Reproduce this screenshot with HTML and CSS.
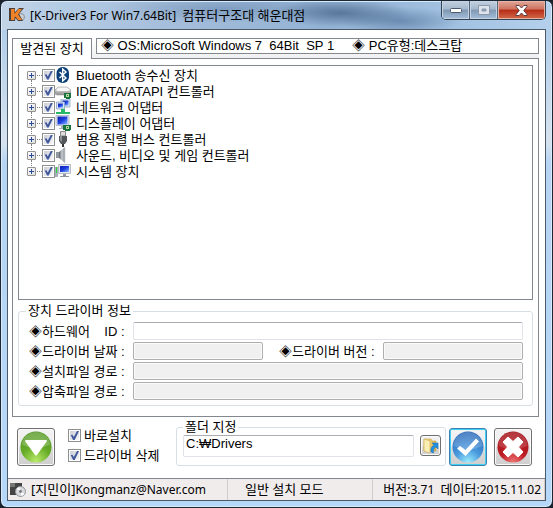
FILE: index.html
```html
<!DOCTYPE html>
<html lang="ko">
<head>
<meta charset="utf-8">
<title>K-Driver3 For Win7.64Bit</title>
<link rel="stylesheet" href="styles.css">
</head>
<body>
<svg width="0" height="0" class="defs" aria-hidden="true">
  <defs>
    <linearGradient id="screen" x1="0" y1="0" x2="1" y2="1"><stop offset="0" stop-color="#0a1fa8"/><stop offset=".5" stop-color="#1c3fe0"/><stop offset="1" stop-color="#8fc0ff"/></linearGradient>
    <linearGradient id="metal" x1="0" y1="0" x2="0" y2="1"><stop offset="0" stop-color="#f4f4f4"/><stop offset="1" stop-color="#8c8c8c"/></linearGradient>
    <linearGradient id="cone" x1="0" y1="0" x2="1" y2="0"><stop offset="0" stop-color="#5c6268"/><stop offset=".5" stop-color="#c8ced2"/><stop offset="1" stop-color="#7d858b"/></linearGradient>
    <radialGradient id="green" cx=".5" cy=".95" r=".95"><stop offset="0" stop-color="#b9ea6a"/><stop offset=".5" stop-color="#67ac28"/><stop offset="1" stop-color="#4f9420"/></radialGradient>
    <radialGradient id="blue" cx=".5" cy="1" r=".95"><stop offset="0" stop-color="#9df0ff"/><stop offset=".45" stop-color="#4a9ade"/><stop offset="1" stop-color="#2566b8"/></radialGradient>
    <radialGradient id="red" cx=".5" cy="1" r=".95"><stop offset="0" stop-color="#f07878"/><stop offset=".45" stop-color="#bd1d24"/><stop offset="1" stop-color="#a5141b"/></radialGradient>
    <linearGradient id="folder" x1="0" y1="0" x2="1" y2="0"><stop offset="0" stop-color="#f8e49a"/><stop offset="1" stop-color="#dfb64e"/></linearGradient>
  </defs>
</svg>
<main class="window">
  <header class="titlebar">
    <svg class="app-icon" viewBox="0 0 16 16" aria-hidden="true">
      <circle cx="12" cy="10" r="3.500" fill="#c9ced3" stroke="#8e969c"/>
      <path d="M0 1h6v4l4-4h5L10 7l4 7H9L6.500 11 6 14H0z" fill="#4a4038"/>
      <path d="M2 2h3.500v5l4-5H13L9 7.500l4 5.500H9L6.500 9.500l-1 1V13H2z" fill="#f08228"/>
    </svg>
    <h1 class="title"><span class="latin">[K-Driver3 For Win7.64Bit]&nbsp; </span>컴퓨터구조대 해운대점</h1>
    <div class="caption-buttons">
      <button class="caption" type="button" aria-label="최소화"><svg width="14" height="8" viewBox="0 0 14 8"><rect x="1.500" y="2.500" width="11" height="4" rx="1" fill="#fff" stroke="#4d5a6c"/></svg></button>
      <button class="caption" type="button" aria-label="최대화" disabled><svg width="12" height="10" viewBox="0 0 12 10"><path d="M.5.5h11v9H.5zM4 4h4v2H4z" fill="#dce3eb" fill-rule="evenodd" stroke="#8d99a8"/></svg></button>
      <button class="caption caption-close" type="button" aria-label="닫기"><svg width="13" height="11" viewBox="0 0 13 11"><path d="M1 .5h3.200L6.500 3 8.800.5H12v1L8.800 5.500 12 9.500v1H8.800L6.500 8l-2.300 2.500H1v-1l3.200-4L1 1.500z" fill="#fff" stroke="#5d3b3f"/></svg></button>
    </div>
  </header>

  <div class="client">
    <div class="tab-row">
      <button class="tab" type="button" role="tab" aria-selected="true">발견된 장치</button>
      <div class="system-info"><span>◈ OS:MicroSoft Windows 7&nbsp; 64Bit&nbsp; SP 1</span><span>◈ PC유형:데스크탑</span></div>
    </div>

    <section class="panel">
      <ul class="tree">
        <li><button class="expander" type="button" aria-label="펼치기"></button><input class="check" type="checkbox" id="d1" checked>
          <svg class="device" viewBox="0 0 16 16"><rect x="1.500" y="0" width="12.500" height="16" rx="6" fill="#0b3f78"/><path d="M4.500 5l6.500 6-3.300 3V2L11 5l-6.500 6" fill="none" stroke="#fff" stroke-width="1.400"/></svg>
          <label for="d1">Bluetooth 송수신 장치</label></li>
        <li><button class="expander" type="button" aria-label="펼치기"></button><input class="check" type="checkbox" id="d2" checked>
          <svg class="device" viewBox="0 0 16 16"><path d="M0 7l3-3h9l4 3v4l-2 1H2l-2-1z" fill="url(#metal)" stroke="#9a9a9a" stroke-width=".6"/><path d="M1 7l3-2h8l3 2-2 1H3z" fill="#f7f7f7"/><path d="M9 10h7v5h-1v1h-4v-1H9z" fill="#17713c"/><path d="M11 11h3v3h-3z" fill="#b8d8a0"/><path d="M12 12h1v1h-1z" fill="#173"/></svg>
          <label for="d2">IDE ATA/ATAPI 컨트롤러</label></li>
        <li><button class="expander" type="button" aria-label="펼치기"></button><input class="check" type="checkbox" id="d3" checked>
          <svg class="device" viewBox="0 0 16 16"><path d="M6 0h9v8H6z" fill="#dce6f2" stroke="#8ba3c4" stroke-width=".8"/><path d="M7.500 1.500h6v5h-6z" fill="url(#screen)"/><path d="M1.500 3h8v7h-8z" fill="#dce6f2" stroke="#8ba3c4" stroke-width=".8"/><path d="M3 4.500h5v4H3z" fill="url(#screen)"/><path d="M6 10h4v3h5v2H1v-2h5z" fill="#28b868"/></svg>
          <label for="d3">네트워크 어댑터</label></li>
        <li><button class="expander" type="button" aria-label="펼치기"></button><input class="check" type="checkbox" id="d4" checked>
          <svg class="device" viewBox="0 0 16 16"><path d="M1 .5h13v10H1z" fill="#e4e8ee" stroke="#a7b0bc" stroke-width=".8"/><path d="M2.500 1.500h10v8h-10z" fill="url(#screen)"/><path d="M6 11h3v2h2v1H4v-1h2z" fill="#a8b0b8"/><path d="M8 10h8v5h-1v1h-5v-1H8z" fill="#17713c"/><path d="M11 11h3v3h-3z" fill="#b8d8a0"/><path d="M12 12h1v1h-1z" fill="#173"/></svg>
          <label for="d4">디스플레이 어댑터</label></li>
        <li><button class="expander" type="button" aria-label="펼치기"></button><input class="check" type="checkbox" id="d5" checked>
          <svg class="device" viewBox="0 0 16 16"><path d="M5.500.5h5V5h-5z" fill="#ddd" stroke="#888"/><path d="M4 5h8v5l-2 3H6l-2-3z" fill="#55585b"/><path d="M5 5h2v6l-2-2z" fill="#909396"/><path d="M7 13h2v3H7z" fill="#333"/></svg>
          <label for="d5">범용 직렬 버스 컨트롤러</label></li>
        <li><button class="expander" type="button" aria-label="펼치기"></button><input class="check" type="checkbox" id="d6" checked>
          <svg class="device" viewBox="0 0 16 16"><path d="M1 5h4v6H1z" fill="#8f989e"/><path d="M4 5l6-5v16l-6-5z" fill="url(#cone)"/><path d="M9.500 1v14" stroke="#aab2b8" stroke-width="1.500"/></svg>
          <label for="d6">사운드, 비디오 및 게임 컨트롤러</label></li>
        <li><button class="expander" type="button" aria-label="펼치기"></button><input class="check" type="checkbox" id="d7" checked>
          <svg class="device" viewBox="0 0 16 16"><path d="M0 4h3v10H0z" fill="#a4b0b8"/><path d="M1 4h1v6H1z" fill="#27dd35"/><path d="M3.500 1.500h12v9h-12z" fill="#e4e8ee" stroke="#a7b0bc" stroke-width=".8"/><path d="M5 3h9v6H5z" fill="url(#screen)"/><path d="M8 11h3v2h3v1H5v-1h3z" fill="#8e969d"/></svg>
          <label for="d7">시스템 장치</label></li>
      </ul>

      <fieldset class="group">
        <legend>장치 드라이버 정보</legend>
        <div class="fields">
          <label for="hwid">◈하드웨어&nbsp;&nbsp;&nbsp; ID :</label><input class="field span" id="hwid" type="text">
          <label for="date">◈드라이버 날짜 :</label><input class="field" id="date" type="text" disabled>
          <label class="second" for="ver">◈드라이버 버전 :</label><input class="field" id="ver" type="text" disabled>
          <label for="inf">◈설치파일 경로 :</label><input class="field span" id="inf" type="text" disabled>
          <label for="zip">◈압축파일 경로 :</label><input class="field span" id="zip" type="text" disabled>
        </div>
      </fieldset>
    </section>

    <section class="actions">
      <button class="action" type="button" aria-label="설치"><svg viewBox="0 0 32 32"><circle cx="16" cy="16" r="15.500" fill="url(#green)"/><path d="M2 14a14 13 0 0 1 28 0q-14 5-28 0z" fill="#fff" opacity=".22"/><path d="M6 9h20q1.500 0 .7 1.500L17 24q-1 1.200-2 0L5.300 10.500Q4.500 9 6 9z" fill="#fff"/></svg></button>
      <div class="options">
        <label><input class="check" type="checkbox" checked>바로설치</label>
        <label><input class="check" type="checkbox" checked>드라이버 삭제</label>
      </div>
      <fieldset class="group folder">
        <legend>폴더 지정</legend>
        <div class="folder-row">
          <input class="field path" type="text" value="C:₩Drivers" aria-label="폴더 지정">
          <button class="browse" type="button" aria-label="찾아보기"><svg viewBox="0 0 17 17"><path d="M2 2h7l1 2h4v10H2z" fill="url(#folder)" stroke="#c9a144" stroke-width=".6"/><path d="M2 2l6 2v12l-6-2z" fill="#fbeeb2" stroke="#cfab54" stroke-width=".6"/><path d="M9 15q-1-5 3-7l-2-2h6v6l-2-2q-3 1-2.500 6z" fill="#2490dd" stroke="#126bb4" stroke-width=".5"/></svg></button>
        </div>
      </fieldset>
      <button class="action action-default" type="button" aria-label="확인"><svg viewBox="0 0 32 32"><circle cx="16" cy="16" r="15.500" fill="url(#blue)"/><path d="M1.500 15a14.500 14 0 0 1 29 0q-14 7-29 0z" fill="#fff" opacity=".2"/><path d="M5 17.500L8 15l5.500 4L24 7.500l3 3-13.500 14.500z" fill="#fff"/></svg></button>
      <button class="action" type="button" aria-label="취소"><svg viewBox="0 0 32 32"><circle cx="16" cy="16" r="15.500" fill="url(#red)"/><path d="M1.500 15a14.500 14 0 0 1 29 0q-14 6-29 0z" fill="#fff" opacity=".16"/><path d="M11 6l5 4.500L21 6l5 5-4.500 5 4.500 5-5 5-5-4.500L11 26l-5-5 4.500-5L6 11z" fill="#fff" stroke="#fff" stroke-linejoin="round"/></svg></button>
    </section>

    <footer class="status">
      <div class="status-cell author"><svg class="disc" viewBox="0 0 16 16" aria-hidden="true"><path d="M0 1h12v12H0z" fill="#444"/><path d="M0 1h5v4H0z" fill="#777"/><circle cx="10.500" cy="9.500" r="5" fill="#d5d9dc" stroke="#91979b"/><path d="M10.500 9.500L6.500 7a5 5 0 0 1 3-2zM10.500 9.500l4 2.500a5 5 0 0 1-3 2z" fill="#fff"/><circle cx="10.500" cy="9.500" r="1.400" fill="#777"/></svg><span>[지민이]<span class="latin">Kongmanz@Naver.com</span></span></div>
      <div class="status-cell mode">일반 설치 모드</div>
      <div class="status-cell version">버전<span class="latin">:3.71&nbsp; </span>데이터<span class="latin">:2015.11.02</span></div>
    </footer>
  </div>
</main>
</body>
</html>
```
FILE: styles.css
```css
* { box-sizing: border-box; }

body {
  margin: 0;
  background: #1b222b;
  font: 13px/15px "Liberation Sans", "Noto Sans CJK KR", sans-serif;
  color: #000;
}

button, input { font: inherit; color: inherit; }
.defs { position: absolute; }

.window {
  display: flex;
  flex-direction: column;
  min-height: 100vh;
  padding: 0 6px 6px;
  border: 1px solid #1c2733;
  border-radius: 7px;
  background:
    radial-gradient(ellipse 70px 14px at 340px 12px, rgba(55, 85, 120, .65), transparent),
    radial-gradient(ellipse 60px 14px at 400px 20px, rgba(75, 110, 150, .6), transparent),
    radial-gradient(ellipse 120px 14px at 220px 8px, rgba(80, 115, 155, .4), transparent),
    linear-gradient(90deg, #c3d4e6 0, #b5cce5 10%, #a5bedb 30%, #93b2d4 60%, #a5c4e3 85%, #b4d0ec) 0 0 / 100% 29px no-repeat,
    linear-gradient(#a8c8e8, #d6e3ee 28%, #b6d4f4 32%, #b6d8f8);
  box-shadow: inset 0 0 0 1px #d9eafa;
}

.titlebar {
  display: flex;
  align-items: flex-start;
  height: 28px;
  padding-left: 2px;
}

.app-icon { width: 16px; height: 16px; margin-top: 6px; }

.title {
  flex: 1;
  margin: 5px 0 0 5px;
  font: 13px/18px "Noto Sans", "Noto Sans CJK KR", sans-serif;
  white-space: nowrap;
}

.latin { font-size: 12px; }

.caption-buttons {
  display: flex;
  overflow: hidden;
  border: 1px solid #334352;
  border-top: 0;
  border-radius: 0 0 5px 5px;
}

.caption {
  display: grid;
  place-items: center;
  width: 28px;
  height: 18px;
  padding: 0;
  border: 0;
  border-right: 1px solid #536577;
  background: linear-gradient(#c2d0df, #a6b8cc 45%, #7f97b1 50%, #a5bfdb);
  box-shadow: inset 0 0 0 1px #c4d4e4;
}

.caption-close {
  width: 47px;
  border-right: 0;
  background: linear-gradient(#dfa799, #cf725f 45%, #b62c17 50%, #d26a48);
  box-shadow: inset 0 0 0 1px #e6b3a5;
}

.client {
  display: flex;
  flex: 1;
  flex-direction: column;
  border: 1px solid #4b5a69;
  background: #fff;
}

.tab-row {
  display: flex;
  align-items: flex-start;
  margin: 8px 6px 0 4px;
  background: linear-gradient(#fff, #f0f0f0);
}

.tab {
  position: relative;
  z-index: 1;
  width: 80px;
  height: 21px;
  margin-bottom: -1px;
  padding: 0 0 2px;
  border: 1px solid #828790;
  border-bottom: 0;
  background: #fff;
}

.system-info {
  display: flex;
  flex: 1;
  gap: 18px;
  height: 16px;
  margin-left: 4px;
  padding-left: 4px;
  border: 1px solid #828790;
  background: #fff;
  line-height: 14px;
  white-space: pre;
}

.panel {
  display: flex;
  flex: 1;
  flex-direction: column;
  margin: 0 6px 0 4px;
  padding: 6px 5px 10px;
  border: 1px solid #828790;
}

.tree {
  flex: 1;
  margin: 0 0 3px;
  padding: 1px 0 0 8px;
  border: 1px solid #828790;
  list-style: none;
}

.tree li {
  position: relative;
  display: flex;
  align-items: center;
  height: 16px;
}

.tree li:not(:last-child)::after {
  content: "";
  position: absolute;
  top: 13px;
  left: 4px;
  height: 6px;
  border-left: 1px dotted #808080;
}

.expander {
  width: 9px;
  height: 9px;
  padding: 0;
  border: 1px solid #919191;
  border-radius: 1px;
  background:
    linear-gradient(#2b4b9b, #2b4b9b) center / 5px 1px no-repeat,
    linear-gradient(#2b4b9b, #2b4b9b) center / 1px 5px no-repeat,
    linear-gradient(135deg, #fff, #ddd);
}

.tree li::before {
  content: "";
  position: absolute;
  left: 10px;
  width: 5px;
  border-top: 1px dotted #808080;
}

.tree .check { margin-left: 6px; }
.device { width: 16px; height: 16px; margin-right: 5px; }

.check {
  flex: none;
  appearance: none;
  width: 13px;
  height: 13px;
  margin: 0;
  border: 1px solid #8e8f8f;
  background: linear-gradient(135deg, #cbcfd5, #f6f6f6) content-box #f4f4f4;
  padding: 1px;
}

.check:checked::before {
  content: "";
  display: block;
  height: 9px;
  background: #41599c;
  clip-path: polygon(8% 45%, 28% 42%, 42% 66%, 78% 0, 100% 0, 52% 100%, 34% 100%);
}

.group {
  min-width: 0;
  margin: 0;
  padding: 3px 9px 5px 10px;
  border: 1px solid #d5dfe5;
  border-radius: 3px;
}

.group legend {
  height: 16px;
  margin-left: -3px;
  padding: 0 2px;
}

.fields {
  display: grid;
  grid-template-columns: 104px 130px 16px 104px 1fr;
  grid-auto-rows: 18px;
  row-gap: 2px;
  align-items: center;
  white-space: nowrap;
}

.second { grid-column: 4; }

.field {
  width: 100%;
  min-width: 0;
  height: 18px;
  padding: 0 2px;
  border: 1px solid #e2e3ea;
  border-top-color: #abadb3;
  border-radius: 2px;
  background: #fff;
}

.field:disabled {
  border-color: #afafaf;
  background: #f0f0f0;
  box-shadow: inset 0 0 0 1px #fafafa;
}

.span { grid-column: 2 / -1; }

.actions {
  display: flex;
  align-items: flex-end;
  padding: 2px 13px 12px 9px;
}

.action, .browse {
  display: grid;
  flex: none;
  place-items: center;
  width: 38px;
  height: 38px;
  padding: 0;
  border: 1px solid #707070;
  border-radius: 3px;
  background: linear-gradient(#f3f3f3, #ebebeb 50%, #dcdcdc 51%, #cfcfcf);
  box-shadow: inset 0 0 0 1px #fafafa;
}

.action svg { width: 32px; height: 32px; }

.action-default {
  margin: 0 7px 0 3px;
  border-color: #3c7fb1;
  box-shadow: inset 0 0 0 1px #3fd0f5;
}

.options {
  display: flex;
  flex-direction: column;
  gap: 5px;
  width: 108px;
  margin: 0 0 3px 13px;
}

.options label {
  display: flex;
  align-items: center;
  gap: 3px;
}

.folder {
  flex: 1;
  padding: 0 4px 8px 6px;
}

.folder legend { margin-left: 0; }

.folder-row {
  display: flex;
  gap: 6px;
}

.path {
  flex: 1;
  height: 22px;
  padding-bottom: 5px;
}

.browse { width: 21px; height: 21px; }
.browse svg { width: 17px; height: 17px; }

.status {
  display: grid;
  grid-template-columns: 220fr 145fr 172fr;
  height: 22px;
  border-top: 1px solid #828790;
  background: #f0ecec;
  font: 13px/20px "Noto Sans", "Noto Sans CJK KR", sans-serif;
  white-space: nowrap;
}

.status-cell { min-width: 0; border-right: 1px solid #d2cece; }
.author { display: flex; align-items: center; gap: 5px; padding-left: 2px; }
.disc { width: 16px; height: 16px; }
.mode { padding-left: 17px; }
.version { padding-right: 3px; text-align: right; }
```
